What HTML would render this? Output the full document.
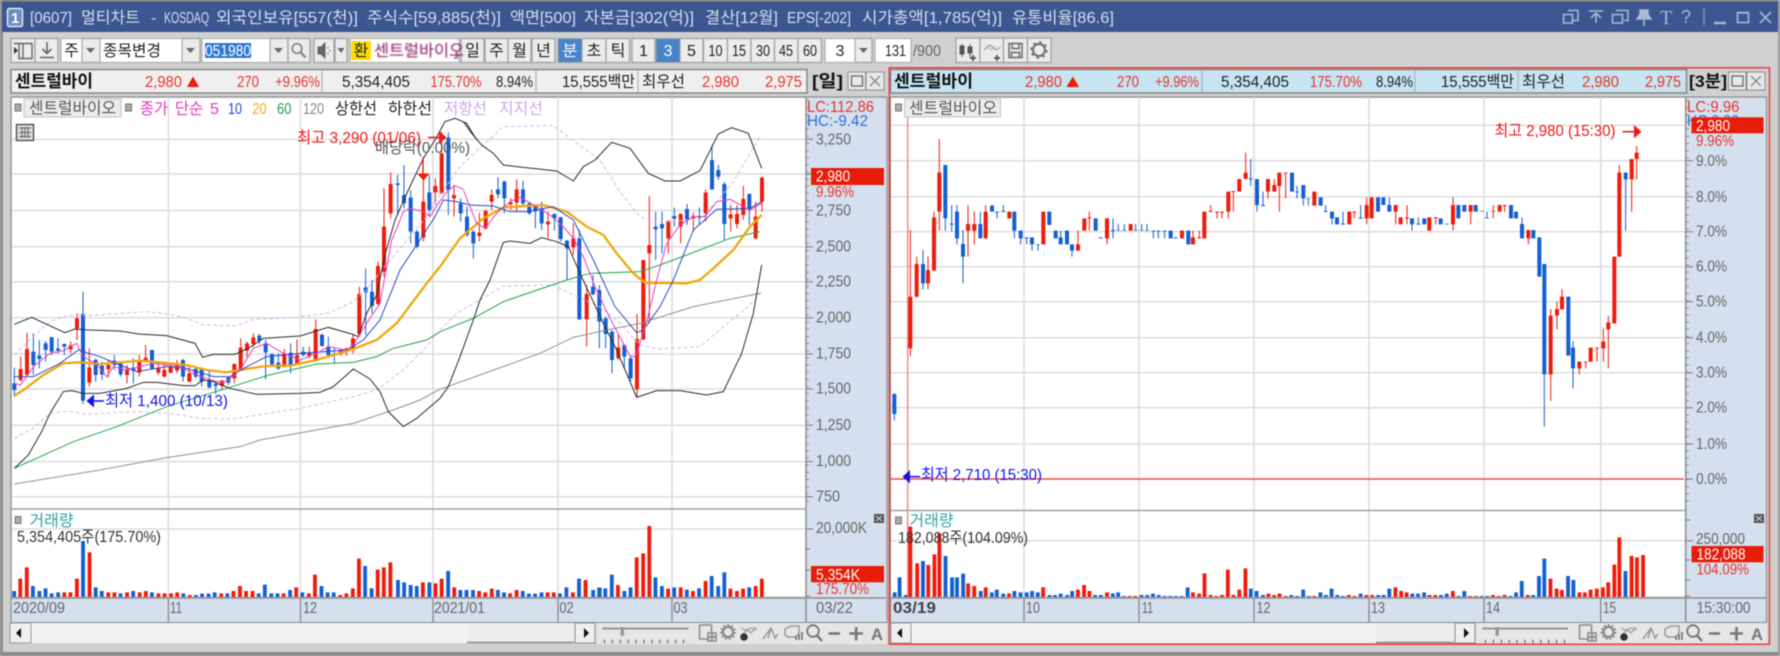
<!DOCTYPE html>
<html lang="ko"><head><meta charset="utf-8"><title>멀티차트</title>
<style>
html,body{margin:0;padding:0;background:#d0d0d0;width:1780px;height:656px;overflow:hidden}
svg{display:block;filter:blur(.4px)}
text{font-family:"Liberation Sans","Noto Sans CJK KR",sans-serif;font-size:16px;fill:#222;white-space:pre}
.r text,text.r{fill:#e8352a}.w text,text.w{fill:#fff}.g text,text.g{fill:#666}
.ti text{fill:#d6deee}
.bd text,text.bd{font-weight:700;fill:#111;font-size:17px}
.btn rect{fill:#ececec;stroke:#a2a2a2;stroke-width:1.300}
.c text{text-anchor:middle}
.wk{fill:none;stroke-width:3}.bo{fill:none;stroke-width:12}
.rd{stroke:#ee1c0c}.bl{stroke:#1460d2}
.vl{fill:none;stroke-width:10}
.ln{fill:none;stroke-width:3}
.og{stroke-width:7}
</style></head><body>
<svg width="1780" height="656" viewBox="0 0 1780 656" xmlns="http://www.w3.org/2000/svg">
<rect width="1780" height="656" fill="#d0d0d0"/>
<rect width="1780" height="2" fill="#777"/><rect y="652" width="1780" height="4" fill="#8a8a8a"/>
<rect x="0" y="0" width="3" height="656" fill="#8d8d8d"/><rect x="1778" y="0" width="2" height="656" fill="#999"/>
<!-- title -->
<rect x="2" y="2" width="1776" height="30" fill="#3b5690"/>
<rect x="7.500" y="8.500" width="15" height="18" rx="2" fill="#6d8cc0" stroke="#dfe8f5" stroke-width="1.500"/>
<text x="11" y="23" class="w" style="font-weight:700;font-size:15px;fill:#fff">1</text>
<g class="ti">
<text x="30" y="23" textLength="42" lengthAdjust="spacingAndGlyphs">[0607]</text>
<text x="81" y="23" textLength="59" lengthAdjust="spacingAndGlyphs">멀티차트</text>
<text x="151" y="23">-</text>
<text x="164" y="23" textLength="45" lengthAdjust="spacingAndGlyphs">KOSDAQ</text>
<text x="216" y="23" textLength="142" lengthAdjust="spacingAndGlyphs">외국인보유[557(천)]</text>
<text x="367" y="23" textLength="134" lengthAdjust="spacingAndGlyphs">주식수[59,885(천)]</text>
<text x="510" y="23" textLength="66" lengthAdjust="spacingAndGlyphs">액면[500]</text>
<text x="584" y="23" textLength="110" lengthAdjust="spacingAndGlyphs">자본금[302(억)]</text>
<text x="705" y="23" textLength="73" lengthAdjust="spacingAndGlyphs">결산[12월]</text>
<text x="787" y="23" textLength="64" lengthAdjust="spacingAndGlyphs">EPS[-202]</text>
<text x="862" y="23" textLength="140" lengthAdjust="spacingAndGlyphs">시가총액[1,785(억)]</text>
<text x="1012" y="23" textLength="102" lengthAdjust="spacingAndGlyphs">유통비율[86.6]</text>
</g>
<g fill="none" stroke="#a9b8d4" stroke-width="1.600">
<path d="M1568 10.500h10v10h-6M1563.500 14.500h9v8.500h-9z"/>
<path d="M1589 11h14M1596 23v-9M1591 18l5-5 5 5"/>
<path d="M1616 10.500h12v10h-4M1612.500 14.500h10v8.500h-10z"/>
<path d="M1644 20v6M1637 19h14l-3-4v-5h-8v5z" fill="#a9b8d4"/>
<path d="M1714 23h12" stroke-width="2.500"/>
<path d="M1737.500 12.500h11v10h-11z M1737.500 13h11" />
<path d="M1760 12l11 11M1771 12l-11 11"/>
<path d="M1704 8v17" stroke="#7f92b8"/>
</g>
<text x="1660" y="24" style="font-family:'Liberation Serif',serif;font-size:20px;fill:#a9b8d4">T</text>
<text x="1681" y="23" style="font-size:18px;fill:#a9b8d4">?</text>

<!-- toolbar -->
<g class="btn">
<rect x="11" y="38.500" width="24" height="24"/><rect x="35" y="38.500" width="23" height="24"/>
<rect x="82" y="38.500" width="18" height="24"/><rect x="182" y="38.500" width="18" height="24"/>
<rect x="270" y="38.500" width="18" height="24"/><rect x="288" y="38.500" width="22" height="24"/>
<rect x="314" y="38.500" width="20" height="24"/><rect x="335" y="38.500" width="12" height="24"/>
<rect x="461" y="38.500" width="23" height="24"/><rect x="485" y="38.500" width="23" height="24"/><rect x="508" y="38.500" width="23" height="24"/><rect x="532" y="38.500" width="23" height="24"/>
<rect x="582" y="38.500" width="24" height="24"/><rect x="606" y="38.500" width="23.500" height="24"/>
<rect x="632" y="38.500" width="23" height="24"/><rect x="680" y="38.500" width="23" height="24"/><rect x="703.500" y="38.500" width="24" height="24"/><rect x="727.500" y="38.500" width="23.500" height="24"/><rect x="751" y="38.500" width="23.500" height="24"/><rect x="774.500" y="38.500" width="23.500" height="24"/><rect x="798" y="38.500" width="23.500" height="24"/>
<rect x="855" y="38.500" width="17" height="24"/>
<rect x="956" y="38" width="24" height="24.500"/><rect x="980" y="38" width="23.500" height="24.500"/><rect x="1003.500" y="38" width="24" height="24.500"/><rect x="1027.500" y="38" width="23.500" height="24.500"/>
</g>
<g fill="#fff" stroke="#b0b0b0" stroke-width="1.200">
<rect x="61" y="38.500" width="21" height="24"/><rect x="100" y="38.500" width="82" height="24"/>
<rect x="202" y="38.500" width="68" height="24"/><rect x="350" y="38.500" width="109" height="24"/>
<rect x="825" y="38.500" width="30" height="24"/><rect x="875" y="38.500" width="36" height="24"/>
</g>
<rect x="558" y="38.500" width="24" height="24" fill="#4a84c8" stroke="#a2a2a2"/>
<rect x="656" y="38.500" width="24" height="24" fill="#4a84c8" stroke="#a2a2a2"/>
<rect x="205" y="43" width="46" height="15" fill="#2f78d2"/>
<rect x="351" y="41" width="20" height="19" fill="#ffdc00"/>
<path d="M86 48h9l-4.500 5zM186 48h9l-4.500 5zM274 48h9l-4.500 5zM337.500 48h7l-3.500 5zM859 48h9l-4.500 5z" fill="#666"/>
<path d="M454 58l4-5v6h-5z" fill="#999"/>
<g fill="none" stroke="#666" stroke-width="1.400">
<path d="M19 43.500h13v15h-13zM14 43.500h5M23 43.500v15"/>
<path d="M47 42v11M42.500 49l4.500 4.500 4.500-4.500M40 57.500h14" stroke-width="1.600"/>
<circle cx="297" cy="48.500" r="4.800" stroke="#888" stroke-width="1.700"/><path d="M300.500 52l5 5.500" stroke="#888" stroke-width="2.400"/>
</g>
<path d="M14 47l4 3.500-4 3.500z" fill="#333"/>
<path d="M318 47h3l4-4v15l-4-4h-3z M328 47v1.500M330 50v1.500M328 53v1.500" fill="#666" stroke="#666"/>
<text x="71.500" y="56" text-anchor="middle">주</text>
<text x="103" y="56" textLength="58" lengthAdjust="spacingAndGlyphs">종목변경</text>
<text x="205" y="56" class="w" textLength="46" lengthAdjust="spacingAndGlyphs">051980</text>
<text x="361" y="56" text-anchor="middle">환</text>
<svg x="372" y="40" width="86" height="22"><text x="2" y="16" textLength="90" lengthAdjust="spacingAndGlyphs" style="fill:#8a1b5a">센트럴바이오</text></svg>
<g class="c">
<text x="472.500" y="56">일</text><text x="496.500" y="56">주</text><text x="519.500" y="56">월</text><text x="543.500" y="56">년</text>
<text x="570" y="56" style="fill:#fff">분</text><text x="594" y="56">초</text><text x="618" y="56">틱</text>
<text x="643.500" y="56">1</text><text x="668" y="56" style="fill:#fff">3</text><text x="691.500" y="56">5</text>
<text x="715.500" y="56" textLength="14" lengthAdjust="spacingAndGlyphs">10</text><text x="739" y="56" textLength="14" lengthAdjust="spacingAndGlyphs">15</text><text x="763" y="56" textLength="14" lengthAdjust="spacingAndGlyphs">30</text><text x="786" y="56" textLength="14" lengthAdjust="spacingAndGlyphs">45</text><text x="810" y="56" textLength="14" lengthAdjust="spacingAndGlyphs">60</text>
<text x="840" y="56">3</text>
</g>
<text x="885" y="56" textLength="21" lengthAdjust="spacingAndGlyphs">131</text>
<text x="913" y="56" class="g" textLength="28" lengthAdjust="spacingAndGlyphs">/900</text>
<g fill="#555" stroke="#555">
<path d="M962 44v13M970 44v13" stroke-width="1"/><rect x="960" y="46" width="4" height="8"/><rect x="968" y="47" width="4" height="6"/>
<path d="M973 55v6M970 58h6" stroke-width="1.800"/>
<path d="M984 50l6-5 6 5 5-3" fill="none" stroke="#888"/><path d="M985 45l6 5 5-4" fill="none" stroke="#bbb"/>
<path d="M997 55v6M994 58h6" stroke-width="1.800"/>
</g>
<g fill="none" stroke="#777" stroke-width="1.700">
<path d="M1009 43.500h13v14h-13zM1012 43.500v5h7v-5M1011.500 57.500v-5h8v5"/>
</g>
<circle cx="1039" cy="50" r="6" fill="none" stroke="#777" stroke-width="2.200"/>
<circle cx="1039" cy="50" r="7.800" fill="none" stroke="#777" stroke-width="2" stroke-dasharray="2.500 3.600"/>

<!-- LEFT CHART FRAME -->
<rect x="11" y="69.500" width="796" height="23.500" fill="#efefef" stroke="#868686" stroke-width="1.500"/>
<path d="M322 70v23M536 70v23M638 70v23" stroke="#b0b0b0" stroke-width="1.200"/>
<text x="15" y="87" class="bd" textLength="78" lengthAdjust="spacingAndGlyphs">센트럴바이</text>
<g class="r">
<text x="145" y="87" textLength="37" lengthAdjust="spacingAndGlyphs">2,980</text>
<text x="237" y="87" textLength="22" lengthAdjust="spacingAndGlyphs">270</text>
<text x="275" y="87" textLength="45" lengthAdjust="spacingAndGlyphs">+9.96%</text>
<text x="430.500" y="87" textLength="51" lengthAdjust="spacingAndGlyphs">175.70%</text>
<text x="702" y="87" textLength="37" lengthAdjust="spacingAndGlyphs">2,980</text>
<text x="765" y="87" textLength="37" lengthAdjust="spacingAndGlyphs">2,975</text>
</g>
<path d="M187 87l6-10.500 6 10.500z" fill="#ee1c0c"/>
<text x="342" y="87" textLength="68" lengthAdjust="spacingAndGlyphs">5,354,405</text>
<text x="496" y="87" textLength="37" lengthAdjust="spacingAndGlyphs">8.94%</text>
<text x="562" y="87" textLength="73" lengthAdjust="spacingAndGlyphs">15,555백만</text>
<text x="642" y="87" textLength="43" lengthAdjust="spacingAndGlyphs">최우선</text>
<text x="812" y="87" class="bd" textLength="31" lengthAdjust="spacingAndGlyphs">[일]</text>
<rect x="848" y="72" width="17.500" height="18" fill="#e8e8e8" stroke="#8e8e8e"/><rect x="851.500" y="76" width="11" height="10" fill="none" stroke="#666" stroke-width="1.300"/>
<rect x="866" y="72" width="18" height="18" fill="#e8e8e8" stroke="#8e8e8e"/><path d="M870 76l10 10M880 76l-10 10" stroke="#8a8a8a" stroke-width="1.300"/>

<rect x="11" y="97" width="876" height="525.500" fill="#d5e0ee" stroke="#8d8d8d" stroke-width="1.200"/>
<rect x="12" y="98" width="793.500" height="500" fill="#fff"/>
<rect x="12" y="598" width="794" height="24" fill="#d5e0ee"/>
<path d="M12 139.300H805M12 174H805M12 210.500H805M12 246.700H805M12 281.700H805M12 317.700H805M12 354H805M12 389H805M12 425.300H805M12 461.500H805M12 496.700H805M12 529H805M12 596.700H805M168.400 97V598M300.500 97V598M433 97V598M558 97V598M672 97V598" stroke="#dcdcdc" stroke-width="1.500" fill="none"/>
<path d="M11 509H805" stroke="#a2a2a2" stroke-width="1.400"/>
<path d="M806 97V622" stroke="#8d8d8d" stroke-width="1.500"/><path d="M11 598H886M168.400 598v24M300.500 598v24M433 598v24M558 598v24M672 598v24" stroke="#8d8d8d" stroke-width="1.400" fill="none"/>
<line x1="807.500" y1="100" x2="807.500" y2="506" stroke="#8a8a8a" stroke-width="3" stroke-dasharray="1 6.150"/>
<path d="M806 139.300h7M806 174h7M806 210.500h7M806 246.700h7M806 281.700h7M806 317.700h7M806 354h7M806 389h7M806 425.300h7M806 461.500h7M806 496.700h7M806 529h7M806 549h4M806 570h4M806 596h4" stroke="#777" fill="none"/>

<!-- right chart frame -->
<rect x="890.500" y="69.500" width="796" height="23.500" fill="#c6e4f2" stroke="#868686" stroke-width="1.500"/>
<path d="M1202 70v23M1415 70v23M1518 70v23" stroke="#a8b8c0" stroke-width="1.200"/>
<text x="894" y="87" class="bd" textLength="79" lengthAdjust="spacingAndGlyphs">센트럴바이</text>
<g class="r">
<text x="1025" y="87" textLength="37" lengthAdjust="spacingAndGlyphs">2,980</text>
<text x="1117" y="87" textLength="22" lengthAdjust="spacingAndGlyphs">270</text>
<text x="1155" y="87" textLength="44" lengthAdjust="spacingAndGlyphs">+9.96%</text>
<text x="1310" y="87" textLength="52" lengthAdjust="spacingAndGlyphs">175.70%</text>
<text x="1582" y="87" textLength="37" lengthAdjust="spacingAndGlyphs">2,980</text>
<text x="1645" y="87" textLength="36" lengthAdjust="spacingAndGlyphs">2,975</text>
</g>
<path d="M1066.500 87l6.300-10.500 6.300 10.500z" fill="#ee1c0c"/>
<text x="1221" y="87" textLength="68" lengthAdjust="spacingAndGlyphs">5,354,405</text>
<text x="1376" y="87" textLength="37" lengthAdjust="spacingAndGlyphs">8.94%</text>
<text x="1441" y="87" textLength="73" lengthAdjust="spacingAndGlyphs">15,555백만</text>
<text x="1522" y="87" textLength="43" lengthAdjust="spacingAndGlyphs">최우선</text>
<text x="1689" y="87" class="bd" textLength="38" lengthAdjust="spacingAndGlyphs">[3분]</text>
<rect x="1728.500" y="72" width="17.500" height="18" fill="#e8e8e8" stroke="#8e8e8e"/><rect x="1732" y="76" width="11" height="10" fill="none" stroke="#666" stroke-width="1.300"/>
<rect x="1747" y="72" width="18" height="18" fill="#e8e8e8" stroke="#8e8e8e"/><path d="M1751 76l10 10M1761 76l-10 10" stroke="#8a8a8a" stroke-width="1.300"/>

<rect x="890.500" y="97" width="876" height="525.500" fill="#d5e0ee" stroke="#8d8d8d" stroke-width="1.200"/>
<rect x="891" y="98" width="794.500" height="500" fill="#fff"/>
<rect x="891" y="598" width="795" height="24" fill="#d5e0ee"/>
<path d="M891 125.300H1685M891 160.700H1685M891 196.700H1685M891 231.700H1685M891 266.700H1685M891 301.700H1685M891 337.700H1685M891 372.700H1685M891 407.700H1685M891 444H1685M891 540.700H1685M891 596.700H1685M1024 97V598M1139 97V598M1254 97V598M1369 97V598M1484 97V598M1600.700 97V598" stroke="#dcdcdc" stroke-width="1.500" fill="none"/>
<path d="M891 510.500H1685" stroke="#a2a2a2" stroke-width="1.400"/>
<path d="M1685.700 97V622" stroke="#8d8d8d" stroke-width="1.500"/><path d="M891 598H1766M1024 598v24M1139 598v24M1254 598v24M1369 598v24M1484 598v24M1600.700 598v24M1685.700 602v20" stroke="#8d8d8d" stroke-width="1.400" fill="none"/>
<line x1="1687.500" y1="100" x2="1687.500" y2="506" stroke="#8a8a8a" stroke-width="3" stroke-dasharray="1 6.150"/>
<path d="M1686 160.700h7M1686 196.700h7M1686 231.700h7M1686 266.700h7M1686 301.700h7M1686 337.700h7M1686 372.700h7M1686 407.700h7M1686 444h7M1686 479h7M1686 540.700h7M1686 520h4M1686 560h4M1686 580h4M1686 596h4" stroke="#777" fill="none"/>
<path d="M891 479H1684" stroke="#f0494a" stroke-width="1.500"/>
<path d="M907.700 107V598" stroke="#ef7a7a" stroke-width="1.300"/>

<!-- LEFT: candles zoom7 -->
<g transform="translate(0,180) scale(.33333)">
<path class="wk rd" d="M62 530V605M81 458V590M212 485V520M231 400V480M268 505V620M325 540V592M381 555V610M418 525V590M437 495V545M475 545V585M493 550V592M512 550V580M531 540V580M568 555V607M666 600V630M703 550V610M722 475V570M741 485V530M760 460V500M853 507V562M891 478V552M928 500V535M947 418V545M1022 505V528M1040 503V527M1059 463V520M1078 320V470M1134 245V375"/>
<path class="bo rd" d="M62 567V600M81 507V585M212 496V508M231 415V445M268 562V607M325 555V568M381 568V585M418 540V578M437 533V545M475 565V578M493 570V590M512 560V578M531 553V572M568 580V605M666 602V618M703 552V595M722 503V567M741 490V512M760 472V492M853 520V558M891 525V550M928 517V528M947 447V540M1022 510V522M1040 505V515M1059 475V510M1078 342V462M1134 258V372"/>
<path class="wk bl" d="M43 562V650M100 460V585M118 480V565M137 483V545M155 470V525M174 475V520M193 490V525M249 335V672M287 535V605M306 545V600M343 525V570M362 550V590M400 535V610M456 510V570M549 537V605M587 565V595M605 565V620M628 575V625M647 605V642M685 590V615M778 462V492M797 480V598M816 520V555M835 520V570M872 490V580M910 500V530M966 462V500M985 470V530M1003 503V552M1097 265V465M1116 300V400"/>
<path class="bo bl" d="M43 610V630M100 515V555M118 527V537M137 490V510M155 472V515M174 505V512M193 492V500M249 402V662M287 540V585M306 557V583M343 542V555M362 550V583M400 563V572M456 510V565M549 540V590M587 567V590M605 568V605M628 600V622M647 612V618M685 592V608M778 467V483M797 490V517M816 522V553M835 548V565M872 518V555M910 515V525M966 464V498M985 500V525M1003 522V525M1097 322V338M1116 335V378"/>
</g>
<!-- LEFT: candles zoom11 -->
<g transform="translate(360,115) scale(.33333)">
<path class="wk rd" d="M72 220V485M92 172V310M190 180V380M226 190V270M245 50V235"/>
<path class="bo rd" d="M72 335V470M92 207V295M190 260V368M226 213V232M245 115V235"/>
<path class="wk bl" d="M113 180V300M132 150V280M152 225V385M171 345V400M208 180V305M265 52V300"/>
<path class="bo bl" d="M113 205V210M132 240V265M152 248V350M171 350V395M208 232V285M265 68V225"/>
</g>
<!-- LEFT: candles zoom8 -->
<g transform="translate(440,110) scale(.33333)">
<path class="wk rd" d="M42 225V320M118 308V395M137 300V360M155 238V300M212 265V300M230 208V305M324 305V385M400 340V435M440 525V710M535 675V750M591 612V860M610 450V690M628 258V640M685 330V430M722 310V400M760 308V365M797 238V335M872 285V365M891 285V355M910 228V330M947 275V388M966 200V305"/>
<path class="bo rd" d="M42 255V265M118 368V378M137 303V355M155 255V275M212 277V283M230 238V278M324 335V343M400 385V412M440 552V628M535 712V745M591 687V838M610 450V688M628 405V430M685 333V385M722 312V350M760 318V325M797 248V310M872 313V325M891 312V342M910 267V315M947 320V385M966 203V275"/>
<path class="wk bl" d="M62 265V335M81 290V380M100 360V445M174 202V265M193 212V310M249 212V285M268 275V315M286 285V355M305 275V360M343 310V362M362 320V395M381 390V510M418 360V630M459 495V555M478 525V715M497 620V715M516 660V790M553 705V775M572 740V815M647 305V450M666 305V430M703 293V350M741 282V345M778 292V345M816 105V240M835 165V210M853 215V390M928 250V345"/>
<path class="bo bl" d="M62 280V310M81 320V375M100 365V400M174 238V253M193 215V265M249 238V280M268 280V310M286 290V305M305 295V340M343 312V325M362 322V387M381 392V415M418 385V628M459 530V553M478 540V635M497 625V672M516 665V750M553 705V740M572 745V805M647 350V358M666 342V355M703 318V326M741 297V328M778 318V323M816 150V238M835 180V200M853 222V342M928 252V300"/>
</g>

<!-- LEFT lines zoom7 -->
<g transform="translate(0,180) scale(.33333)">
<path class="ln" stroke="#d8b4f2" stroke-dasharray="11 8" d="M43 525L100 470 150 425 200 407 300 405 440 395 510 403 560 415 610 435 710 437 760 418 880 413 990 398 1060 365 1100 330 1150 265 1200 205 1280 110 1320 45"/>
<path class="ln" stroke="#d8b4f2" stroke-dasharray="11 8" d="M43 775L100 745 150 700 200 693 260 703 400 695 510 700 600 715 700 717 760 707 900 685 1060 650 1130 630 1210 570 1280 500 1320 450"/>
<path class="ln" stroke="#909090" d="M43 912L300 870 500 833 720 800 780 780 1060 730 1180 690 1260 660 1320 628"/>
<path class="ln" stroke="#1fa24a" d="M43 865L220 785 350 740 500 680 680 625 800 587 950 552 1060 547 1130 530 1180 505 1280 480 1320 455"/>
<path class="ln og" stroke="#f0a810" d="M43 648L70 630 130 585 190 550 240 547 300 552 420 542 480 547 560 555 620 570 680 577 750 565 800 558 870 557 950 540 1060 507 1130 480 1190 430 1280 310 1320 260"/>
<path class="ln" stroke="#2a2a2a" d="M43 433L95 412 140 433 195 458 225 447 265 450 360 453 415 462 500 467 585 490 608 532 640 523 705 523 745 505 790 475 900 468 985 442 1055 462 1075 470 1100 400 1130 345 1155 225 1185 120 1225 30"/>
<path class="ln" stroke="#2a2a2a" d="M43 865L85 825 125 755 150 700 190 635 215 632 250 640 300 640 380 625 430 607 470 607 550 617 585 617 610 600 640 605 690 625 770 643 900 640 960 637 1000 620 1060 567 1110 597 1140 635 1165 695 1210 740 1250 715 1320 655"/>
<path class="ln" stroke="#2b46c8" d="M43 590L100 590 180 550 235 510 300 530 360 555 410 575 500 560 560 565 640 590 690 590 740 560 800 530 900 520 1040 510 1090 480 1140 420 1200 270 1250 195 1305 110"/>
<path class="ln" stroke="#ea3cc0" d="M43 610L62 615 100 560 150 520 190 512 230 490 250 530 290 552 320 590 340 560 380 570 420 560 460 550 540 560 600 590 650 605 680 605 720 570 760 505 800 490 850 520 900 540 950 520 985 500 1040 510 1060 495 1100 430 1140 370 1175 180 1190 145"/>
</g>
<!-- LEFT lines zoom11 -->
<g transform="translate(360,115) scale(.33333)">
<path class="ln" stroke="#ea3cc0" d="M110 340L130 290 150 280 190 290 210 305 235 265 265 225 285 212 310 222"/>
<path class="ln" stroke="#2b46c8" d="M225 305L250 255 290 260 330 270"/>
<path class="ln" stroke="#2a2a2a" d="M145 225L190 130 225 75 255 20 285 10 320 25 350 75"/>
</g>
<!-- LEFT lines zoom8 -->
<g transform="translate(440,110) scale(.33333)">
<path class="ln" stroke="#d8b4f2" stroke-dasharray="11 8" d="M0 255L60 170 130 105 190 50 340 47 390 85 480 150 540 245 600 320 640 335 780 330 830 275 880 215 960 80"/>
<path class="ln" stroke="#d8b4f2" stroke-dasharray="11 8" d="M0 660L50 610 120 570 190 528 340 525 400 555 480 590 540 640 600 705 660 717 780 710 850 650 925 590 965 545"/>
<path class="ln" stroke="#909090" d="M0 838L300 730 400 682 500 660 600 640 760 590 960 550"/>
<path class="ln" stroke="#1fa24a" d="M0 665L100 625 190 575 380 510 450 490 600 485 660 465 740 435 870 385 960 365"/>
<path class="ln og" stroke="#f0a810" d="M0 470L60 385 130 325 190 292 310 285 380 305 440 350 490 375 530 430 580 490 615 518 740 520 780 510 820 475 880 420 930 350 965 315"/>
<path class="ln" stroke="#2a2a2a" d="M70 35L95 70 125 105 160 130 190 165 250 172 350 183 400 213 430 170 465 150 515 97 570 115 625 190 675 213 720 213 780 182 835 72 875 53 925 70 965 175"/>
<path class="ln" stroke="#2a2a2a" d="M0 865L25 830 60 740 100 630 120 570 150 510 190 397 210 393 270 400 305 383 350 395 385 410 420 490 490 640 530 720 590 862 650 842 720 842 800 855 850 845 905 730 940 610 965 465"/>
<path class="ln" stroke="#2b46c8" d="M90 285L160 288 210 305 260 305 340 290 400 330 460 450 525 590 590 668 610 660 660 590 700 510 760 360 830 298 930 295 965 275"/>
<path class="ln" stroke="#ea3cc0" d="M70 240L90 290 110 340 135 355 170 310 210 275 240 262 290 290 330 315 365 345 400 385 430 440 465 530 510 625 570 738 585 740 600 700 625 615 650 510 680 400 720 345 760 320 795 320 830 275 870 268 930 300 965 280"/>
</g>

<!-- LEFT volume -->
<g transform="translate(0,500) scale(.38270,.33333)">
<path class="vl rd" d="M53 291V236M70 291V202M168 291V277M184 291V277M201 291V236M234 291V157M283 291V277M299 291V277M332 291V277M365 291V277M381 291V273M414 291V280M430 291V280M447 291V280M463 291V277M496 291V285M578 291V280M610 291V273M627 291V258M643 291V273M660 291V273M741 291V280M774 291V262M807 291V280M823 291V224M889 291V285M905 291V280M922 291V265M938 291V176M987 291V209M1003 291V202M1020 291V187M1105 291V247M1138 291V250M1154 291V236M1187 291V262M1252 291V273M1268 291V277M1285 291V266M1333 291V280M1350 291V270M1431 291V277M1447 291V277M1497 291V277M1530 291V240"/>
<path class="vl bl" d="M37 291V273M86 291V258M103 291V273M119 291V265M135 291V280M152 291V277M217 291V123M250 291V262M266 291V273M315 291V280M348 291V273M397 291V277M479 291V280M512 291V285M528 291V281M545 291V281M561 291V277M594 291V280M676 291V280M692 291V254M709 291V280M725 291V280M758 291V270M790 291V277M840 291V258M856 291V277M872 291V277M954 291V198M971 291V265M1040 291V240M1056 291V247M1073 291V255M1089 291V258M1122 291V247M1171 291V213M1203 291V270M1219 291V270M1236 291V270M1301 291V270M1317 291V277M1366 291V273M1382 291V281M1398 291V281M1415 291V277M1463 291V280M1480 291V262M1513 291V236M1550 291V270M1567 291V263"/>
</g>
<g transform="translate(590,500) scale(.38270,.33333)">
<path class="vl rd" d="M73 291V255M122 291V172M139 291V160M155 291V78M204 291V266M237 291V262M269 291V273M302 291V243M367 291V266M384 291V273M400 291V266M433 291V258M449 291V236"/>
<path class="vl bl" d="M24 291V263M40 291V265M57 291V224M90 291V273M106 291V262M171 291V232M188 291V258M220 291V262M253 291V269M285 291V265M318 291V228M335 291V258M351 291V217M416 291V262"/>
</g>
<!-- RIGHT candles zoom9 -->
<g transform="translate(890,110) scale(.33333)">
<path class="wk rd" d="M61 360V738M80 440V562M114 440V538M132 305V482M148 87V362M234 285V440M253 305V403M287 285V385M358 305V325M460 305V403M564 362V422M583 325V362M598 305V362M651 325V403M722 342V362M876 362V385M909 362V403M928 362V385M943 305V385M962 285V305M981 305V325M996 305V325M1015 245V325M1030 245V305M1048 207V245M1067 128V207M1134 207V265M1153 207V245M1168 188V305M1187 188V265M1273 245V287"/>
<path class="bo rd" d="M61 560V715M80 462V560M114 480V520M132 322V482M148 188V305M234 342V362M253 342V362M287 305V385M358 305V325M460 305V403M564 403V422M583 325V362M598 322V325M651 325V385M722 342V362M876 362V385M909 382V403M928 382V385M943 305V385M962 303V306M981 305V308M996 305V308M1015 245V305M1030 243V246M1048 207V245M1067 188V207M1134 207V245M1153 225V245M1168 188V228M1187 188V190M1273 245V287"/>
<path class="wk bl" d="M13 850V932M99 420V538M166 165V362M185 285V365M201 285V403M219 360V520M271 305V385M306 285V305M321 305V325M340 285V305M373 305V385M392 362V403M410 382V403M426 382V422M444 403V422M478 305V345M497 362V385M512 362V403M531 362V403M546 403V440M617 325V362M669 325V385M685 342V362M703 342V362M737 342V362M755 342V362M771 342V362M790 362V385M805 362V385M824 362V385M842 362V385M895 362V403M1082 147V228M1101 207V305M1119 245V287M1206 188V245M1221 228V265M1240 225V287M1255 265V287M1292 262V287M1307 285V305M1326 305V343"/>
<path class="bo bl" d="M13 852V912M99 462V520M166 165V325M185 341V344M201 305V385M219 402V440M271 342V385M306 287V305M321 305V308M340 303V306M373 305V362M392 362V385M410 382V385M426 382V403M444 403V405M478 305V345M497 362V385M512 382V403M531 362V403M546 403V422M617 325V362M632 382V385M669 360V363M685 360V362M703 360V362M737 360V362M755 360V362M771 360V362M790 362V364M805 362V364M824 362V364M842 362V385M857 382V385M895 362V403M1082 205V208M1101 207V285M1119 285V288M1206 188V245M1221 245V247M1240 225V265M1255 265V267M1292 262V287M1307 303V306M1326 305V325"/>
</g>
<!-- RIGHT candles zoom10 -->
<g transform="translate(1330,110) scale(.33333)">
<path class="wk rd" d="M58 305V343M73 305V325M110 262V343M125 262V325M197 285V343M212 322V343M231 285V343M298 322V362M317 322V343M369 262V362M422 285V343M490 285V325M509 285V305M524 285V305M595 360V403M662 597V873M681 575V658M696 537V598M748 755V793M767 755V775M782 713V755M801 713V755M820 655V755M835 617V775M853 440V640M868 165V440M905 147V305M920 108V208"/>
<path class="bo rd" d="M58 305V343M73 305V308M110 285V325M125 262V325M197 285V305M212 322V343M231 322V325M298 322V362M317 322V325M369 285V343M422 285V305M490 303V305M509 285V305M524 285V288M595 360V385M662 617V793M681 597V617M696 560V598M748 755V775M767 755V757M782 713V755M801 713V715M820 695V715M835 637V658M853 440V640M868 188V440M905 147V208M920 128V147"/>
<path class="wk bl" d="M21 322V343M39 305V343M92 285V325M144 262V305M160 262V285M178 262V305M246 325V362M265 322V343M283 325V343M332 325V343M385 285V325M403 285V305M437 285V305M471 305V325M543 285V325M558 305V325M576 322V385M610 360V385M628 382V500M643 462V950M715 560V737M729 693V835M887 188V362"/>
<path class="bo bl" d="M21 322V343M39 341V344M92 323V326M144 262V305M160 262V285M178 285V305M246 325V343M265 341V344M283 325V343M332 325V343M350 341V343M385 285V325M403 285V305M437 285V305M456 303V305M471 323V325M543 285V325M558 305V325M576 342V385M610 360V385M628 382V500M643 462V793M715 560V737M729 713V775M887 188V208"/>
</g>
<!-- RIGHT volume -->
<g transform="translate(590,500) scale(.38270,.33333)">
<path class="vl rd" d="M837 291V80M855 291V190M884 291V195M900 291V163M913 291V100M988 291V250M1004 291V258M1034 291V262M1095 291V280M1184 291V262M1275 291V269M1291 291V255M1305 291V273M1351 291V277M1410 291V288M1425 291V288"/>
<path class="vl bl" d="M796 291V277M809 291V232M825 291V285M870 291V183M929 291V168M946 291V232M959 291V232M975 291V221M1021 291V273M1050 291V277M1063 291V269M1080 291V281M1109 291V273M1125 291V277M1141 291V277M1155 291V273M1170 291V277M1201 291V285M1215 291V285M1230 291V281M1247 291V285M1260 291V273M1320 291V285M1335 291V285M1366 291V280M1380 291V277M1395 291V288M1441 291V285M1456 291V285M1471 291V281M1486 291V285M1501 291V288M1516 291V288M1531 291V288M1546 291V288"/>
</g>
<g transform="translate(1180,500) scale(.38270,.33333)">
<path class="vl rd" d="M34 291V277M50 291V281M64 291V220M80 291V285M95 291V288M110 291V285M125 291V209M140 291V285M155 291V269M171 291V205M231 291V281M246 291V285M260 291V281M276 291V288M351 291V288M441 291V285M456 291V288M487 291V285M502 291V285M563 291V262M578 291V273M592 291V277M652 291V285M667 291V285M713 291V273M758 291V288M773 291V288M818 291V285M833 291V288M848 291V285M909 291V285M968 291V236M984 291V266M998 291V270M1044 291V277M1058 291V277M1073 291V269M1089 291V266M1105 291V262M1119 291V247M1135 291V194M1148 291V112M1180 291V168M1194 291V172M1210 291V165"/>
<path class="vl bl" d="M20 291V262M185 291V266M200 291V273M217 291V285M291 291V285M306 291V288M322 291V269M337 291V288M367 291V277M381 291V285M396 291V266M411 291V285M426 291V288M472 291V281M518 291V285M532 291V285M547 291V266M607 291V281M622 291V281M638 291V277M682 291V285M697 291V281M728 291V288M743 291V273M788 291V288M803 291V288M863 291V288M878 291V277M893 291V243M923 291V285M938 291V228M952 291V176M1014 291V228M1028 291V240M1164 291V213"/>
</g>

<!-- overlays left -->
<rect x="15" y="104" width="6" height="7" fill="#aaa" stroke="#777"/>
<rect x="24" y="99" width="97" height="18" fill="#ececec" stroke="#c4c4c4"/>
<text x="29" y="113.500" class="g" style="fill:#555" textLength="87" lengthAdjust="spacingAndGlyphs">센트럴바이오</text>
<rect x="125.500" y="104" width="6" height="7" fill="#aaa" stroke="#777"/>
<text x="140" y="114" style="fill:#e23bbf" textLength="28" lengthAdjust="spacingAndGlyphs">종가</text>
<text x="175" y="114" style="fill:#e23bbf" textLength="28" lengthAdjust="spacingAndGlyphs">단순</text>
<text x="210" y="114" style="fill:#e23bbf">5</text>
<text x="228" y="114" style="fill:#2b46c8" textLength="14" lengthAdjust="spacingAndGlyphs">10</text>
<text x="252.500" y="114" style="fill:#f0a810" textLength="14" lengthAdjust="spacingAndGlyphs">20</text>
<text x="277" y="114" style="fill:#1fa24a" textLength="14.500" lengthAdjust="spacingAndGlyphs">60</text>
<text x="303" y="114" style="fill:#888" textLength="21" lengthAdjust="spacingAndGlyphs">120</text>
<text x="335" y="114" textLength="42" lengthAdjust="spacingAndGlyphs">상한선</text>
<text x="388" y="114" textLength="44" lengthAdjust="spacingAndGlyphs">하한선</text>
<text x="444" y="114" style="fill:#cba8f0" textLength="43" lengthAdjust="spacingAndGlyphs">저항선</text>
<text x="499" y="114" style="fill:#cba8f0" textLength="44" lengthAdjust="spacingAndGlyphs">지지선</text>
<rect x="16.500" y="124.500" width="17" height="16" fill="#ddd" stroke="#444" stroke-width="1.300"/>
<path d="M19 128h12M19 132.500h12M19 136.500h12M22 127v11M25 127v11M28 127v11" stroke="#666" fill="none"/>
<text x="297" y="143" class="r" style="fill:#f01818" textLength="124" lengthAdjust="spacingAndGlyphs">최고 3,290 (01/06)</text>
<path d="M428 137.500h13" stroke="#f01818" stroke-width="1.600"/><path d="M439 131l7.500 6.500-7.500 6.500z" fill="#f01818"/>
<text x="375" y="153" style="fill:#555" textLength="95" lengthAdjust="spacingAndGlyphs">배당락(0.00%)</text>
<path d="M423 157v17" stroke="#ee1c0c" stroke-width="1.400"/><path d="M417 173.500h12.500l-6 7z" fill="#ee1c0c"/>
<text x="105" y="406" style="fill:#1414ee" textLength="123" lengthAdjust="spacingAndGlyphs">최저 1,400 (10/13)</text>
<path d="M92 401h12" stroke="#1414ee" stroke-width="1.600"/><path d="M94 394.500l-7.500 6.500 7.500 6.500z" fill="#1414ee"/>
<rect x="15" y="516.500" width="6" height="7" fill="#aaa" stroke="#777"/>
<text x="29.500" y="526" style="fill:#2fa3a3" textLength="44" lengthAdjust="spacingAndGlyphs">거래량</text>
<text x="17" y="542" style="fill:#333" textLength="144" lengthAdjust="spacingAndGlyphs">5,354,405주(175.70%)</text>

<!-- left axis labels -->
<text x="807" y="112" class="r" textLength="67" lengthAdjust="spacingAndGlyphs">LC:112.86</text>
<text x="807" y="126" style="fill:#2f6fd8" textLength="61" lengthAdjust="spacingAndGlyphs">HC:-9.42</text>
<g class="g">
<text x="816" y="144.500" textLength="35" lengthAdjust="spacingAndGlyphs">3,250</text>
<text x="816" y="179" textLength="35" lengthAdjust="spacingAndGlyphs">3,000</text>
<text x="816" y="215.500" textLength="35" lengthAdjust="spacingAndGlyphs">2,750</text>
<text x="816" y="251.500" textLength="35" lengthAdjust="spacingAndGlyphs">2,500</text>
<text x="816" y="286.500" textLength="35" lengthAdjust="spacingAndGlyphs">2,250</text>
<text x="816" y="322.500" textLength="35" lengthAdjust="spacingAndGlyphs">2,000</text>
<text x="816" y="358.500" textLength="35" lengthAdjust="spacingAndGlyphs">1,750</text>
<text x="816" y="393.500" textLength="35" lengthAdjust="spacingAndGlyphs">1,500</text>
<text x="816" y="430" textLength="35" lengthAdjust="spacingAndGlyphs">1,250</text>
<text x="816" y="466" textLength="35" lengthAdjust="spacingAndGlyphs">1,000</text>
<text x="816" y="501.500" textLength="24" lengthAdjust="spacingAndGlyphs">750</text>
<text x="816" y="533" textLength="51" lengthAdjust="spacingAndGlyphs">20,000K</text>
<text x="13" y="613" textLength="52" lengthAdjust="spacingAndGlyphs">2020/09</text>
<text x="170" y="613" textLength="12" lengthAdjust="spacingAndGlyphs">11</text>
<text x="303" y="613" textLength="14" lengthAdjust="spacingAndGlyphs">12</text>
<text x="434" y="613" textLength="51" lengthAdjust="spacingAndGlyphs">2021/01</text>
<text x="559.500" y="613" textLength="14" lengthAdjust="spacingAndGlyphs">02</text>
<text x="673.500" y="613" textLength="14" lengthAdjust="spacingAndGlyphs">03</text>
<text x="816" y="613" textLength="37" lengthAdjust="spacingAndGlyphs">03/22</text>
</g>
<rect x="811" y="168" width="73" height="17" fill="#e81c08"/>
<text x="816" y="181.500" class="w" textLength="34" lengthAdjust="spacingAndGlyphs">2,980</text>
<text x="816" y="197" class="r" textLength="38" lengthAdjust="spacingAndGlyphs">9.96%</text>
<rect x="811" y="566" width="73" height="16.300" fill="#e81c08"/>
<text x="816" y="580" class="w" textLength="44" lengthAdjust="spacingAndGlyphs">5,354K</text>
<text x="816" y="594" class="r" textLength="53" lengthAdjust="spacingAndGlyphs">175.70%</text>
<rect x="874" y="514" width="10" height="9" fill="#555"/><path d="M876 516l6 5M882 516l-6 5" stroke="#ddd"/>

<!-- right overlays -->
<rect x="895.500" y="104" width="6" height="7" fill="#aaa" stroke="#777"/>
<rect x="904.500" y="99" width="96" height="18" fill="#ececec" stroke="#c4c4c4"/>
<text x="909" y="113.500" style="fill:#555" textLength="88" lengthAdjust="spacingAndGlyphs">센트럴바이오</text>
<text x="1494.500" y="136" style="fill:#f01818" textLength="121" lengthAdjust="spacingAndGlyphs">최고 2,980 (15:30)</text>
<path d="M1622.500 131.700h12" stroke="#f01818" stroke-width="1.600"/><path d="M1634 125l7.500 6.700-7.500 6.700z" fill="#f01818"/>
<text x="921" y="480" style="fill:#1414ee" textLength="121" lengthAdjust="spacingAndGlyphs">최저 2,710 (15:30)</text>
<path d="M908 476.700h12" stroke="#1414ee" stroke-width="1.600"/><path d="M910 470l-7.500 6.700 7.500 6.700z" fill="#1414ee"/>
<rect x="895.500" y="517" width="6" height="7" fill="#aaa" stroke="#777"/>
<text x="909.500" y="526" style="fill:#2fa3a3" textLength="44" lengthAdjust="spacingAndGlyphs">거래량</text>
<text x="898" y="543" style="fill:#333" textLength="130" lengthAdjust="spacingAndGlyphs">182,088주(104.09%)</text>

<text x="1687" y="112" class="r" textLength="52.500" lengthAdjust="spacingAndGlyphs">LC:9.96</text>
<text x="1687" y="126" style="fill:#2f6fd8" textLength="52" lengthAdjust="spacingAndGlyphs">HC:0.00</text>
<g class="g">
<text x="1696" y="166" textLength="31" lengthAdjust="spacingAndGlyphs">9.0%</text>
<text x="1696" y="202" textLength="31" lengthAdjust="spacingAndGlyphs">8.0%</text>
<text x="1696" y="236.500" textLength="31" lengthAdjust="spacingAndGlyphs">7.0%</text>
<text x="1696" y="271.500" textLength="31" lengthAdjust="spacingAndGlyphs">6.0%</text>
<text x="1696" y="306.500" textLength="31" lengthAdjust="spacingAndGlyphs">5.0%</text>
<text x="1696" y="342.500" textLength="31" lengthAdjust="spacingAndGlyphs">4.0%</text>
<text x="1696" y="377.500" textLength="31" lengthAdjust="spacingAndGlyphs">3.0%</text>
<text x="1696" y="412.500" textLength="31" lengthAdjust="spacingAndGlyphs">2.0%</text>
<text x="1696" y="449" textLength="31" lengthAdjust="spacingAndGlyphs">1.0%</text>
<text x="1696" y="484" textLength="31" lengthAdjust="spacingAndGlyphs">0.0%</text>
<text x="1696" y="544" textLength="49" lengthAdjust="spacingAndGlyphs">250,000</text>
<text x="1026" y="613" textLength="14" lengthAdjust="spacingAndGlyphs">10</text>
<text x="1142" y="613" textLength="11" lengthAdjust="spacingAndGlyphs">11</text>
<text x="1256.500" y="613" textLength="14" lengthAdjust="spacingAndGlyphs">12</text>
<text x="1371" y="613" textLength="14" lengthAdjust="spacingAndGlyphs">13</text>
<text x="1486" y="613" textLength="14" lengthAdjust="spacingAndGlyphs">14</text>
<text x="1603" y="613" textLength="13" lengthAdjust="spacingAndGlyphs">15</text>
<text x="1696.500" y="613" textLength="54" lengthAdjust="spacingAndGlyphs">15:30:00</text>
</g>
<text x="893" y="613" style="font-weight:700;fill:#444" textLength="43" lengthAdjust="spacingAndGlyphs">03/19</text>
<rect x="1691.500" y="117.300" width="72" height="16" fill="#e81c08"/>
<text x="1696" y="131" class="w" textLength="34" lengthAdjust="spacingAndGlyphs">2,980</text>
<text x="1696" y="146" class="r" textLength="38" lengthAdjust="spacingAndGlyphs">9.96%</text>
<rect x="1691.500" y="546" width="72" height="16.300" fill="#e81c08"/>
<text x="1696.500" y="559.500" class="w" textLength="49" lengthAdjust="spacingAndGlyphs">182,088</text>
<text x="1696.500" y="574.500" class="r" textLength="52.500" lengthAdjust="spacingAndGlyphs">104.09%</text>
<rect x="1754" y="514" width="10" height="9" fill="#555"/><path d="M1756 516l6 5M1762 516l-6 5" stroke="#ddd"/>

<!-- left scrollbar -->
<rect x="10" y="623" width="586" height="20" fill="#f2f2f2"/>
<rect x="10" y="623" width="21" height="20" fill="#efefef" stroke="#9a9a9a"/><path d="M21 628v10l-5-5z" fill="#111"/>
<rect x="467" y="623" width="107" height="19" fill="#ededed"/><path d="M467 642.500h107" stroke="#8a8a8a" stroke-width="1.500"/>
<rect x="575" y="623" width="20" height="20" fill="#efefef" stroke="#8a8a8a"/><path d="M584 628v10l5-5z" fill="#111"/>
<rect x="597" y="623" width="290" height="21" fill="#e6e6e6"/>
<path d="M602.500 628.500H688.500" stroke="#888" stroke-width="1.800"/><path d="M620.500 627h3.500v9h-3.500z" fill="#999"/>
<line x1="604" y1="641.500" x2="688" y2="641.500" stroke="#555" stroke-width="3.500" stroke-dasharray="1 6.900"/>
<g fill="none" stroke="#888" stroke-width="1.500">
<rect x="699.500" y="625" width="12" height="14" rx="1"/><rect x="708" y="633" width="8" height="8" fill="#ddd"/><path d="M712 633v8M708 637h8"/>
<circle cx="728" cy="632" r="5" stroke-width="2.200"/><circle cx="728" cy="632" r="7" stroke-width="1.800" stroke-dasharray="2 2"/>
<path d="M742 636l5-7 4 4 5-6M741 628l6 3 4-3 6 2" stroke="#aaa"/><circle cx="744" cy="637" r="3" fill="#333" stroke="#333"/>
<path d="M763 639l8-11 4 10 3-4M771 628l-3 10" stroke="#999"/>
<path d="M785 635v-6l6-3h8v8l-4 3h-7z" stroke="#999"/>
</g>
<path d="M796 640v-4M799 640v-6M802 640v-8" stroke="#666" stroke-width="1.500"/>
<circle cx="813" cy="631" r="5.800" fill="none" stroke="#777" stroke-width="1.800"/><path d="M817 635.500l5 5.500" stroke="#777" stroke-width="2.400"/>
<path d="M828.500 633.500H840M849.500 633.500H863M856.200 627v13.500" stroke="#777" stroke-width="2.600"/>
<text x="871" y="640" style="font-weight:700;font-size:17px;fill:#777" textLength="12" lengthAdjust="spacingAndGlyphs">A</text>

<!-- right scrollbar -->
<rect x="891" y="623" width="584" height="20" fill="#f2f2f2"/>
<rect x="891" y="623" width="20" height="20" fill="#efefef" stroke="#9a9a9a"/><path d="M902 628v10l-5-5z" fill="#111"/>
<rect x="1376" y="623" width="78" height="19" fill="#ededed"/><path d="M1376 642.500h78" stroke="#8a8a8a" stroke-width="1.500"/>
<rect x="1455" y="623" width="20" height="20" fill="#efefef" stroke="#8a8a8a"/><path d="M1464 628v10l5-5z" fill="#111"/>
<rect x="1476" y="623" width="291" height="21" fill="#e6e6e6"/>
<path d="M1482.500 628.500H1568" stroke="#888" stroke-width="1.800"/><path d="M1495.500 627h3.500v9h-3.500z" fill="#999"/>
<line x1="1485" y1="641.500" x2="1568" y2="641.500" stroke="#555" stroke-width="3.500" stroke-dasharray="1 6.900"/>
<g fill="none" stroke="#888" stroke-width="1.500">
<rect x="1579.500" y="625" width="12" height="14" rx="1"/><rect x="1588" y="633" width="8" height="8" fill="#ddd"/><path d="M1592 633v8M1588 637h8"/>
<circle cx="1608.500" cy="632" r="5" stroke-width="2.200"/><circle cx="1608.500" cy="632" r="7" stroke-width="1.800" stroke-dasharray="2 2"/>
<path d="M1622 636l5-7 4 4 5-6M1621 628l6 3 4-3 6 2" stroke="#aaa"/><circle cx="1624" cy="637" r="3" fill="#333" stroke="#333"/>
<path d="M1643 639l8-11 4 10 3-4M1651 628l-3 10" stroke="#999"/>
<path d="M1665 635v-6l6-3h8v8l-4 3h-7z" stroke="#999"/>
</g>
<path d="M1676 640v-4M1679 640v-6M1682 640v-8" stroke="#666" stroke-width="1.500"/>
<circle cx="1693" cy="631" r="5.800" fill="none" stroke="#777" stroke-width="1.800"/><path d="M1697 635.500l5 5.500" stroke="#777" stroke-width="2.400"/>
<path d="M1709 633.500H1720M1730 633.500H1743M1736.500 627v13.500" stroke="#777" stroke-width="2.600"/>
<text x="1751" y="640" style="font-weight:700;font-size:17px;fill:#777" textLength="12" lengthAdjust="spacingAndGlyphs">A</text>

<!-- active window red outline -->
<rect x="889.300" y="67.800" width="880.200" height="576.400" fill="none" stroke="#ee3a3a" stroke-width="1.500"/>
</svg>
</body></html>
